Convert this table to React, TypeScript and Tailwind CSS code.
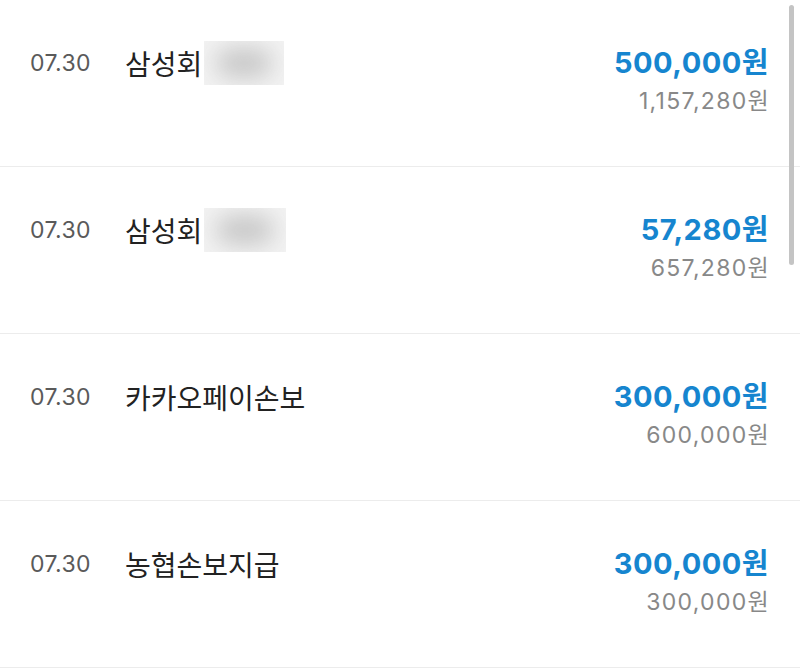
import React from 'react';

type Tx = {
  date: string;
  name: string;
  masked?: number;
  amount: string;
  balance: string;
};

const rows: Tx[] = [
  { date: '07.30', name: '삼성회', masked: 80, amount: '500,000원', balance: '1,157,280원' },
  { date: '07.30', name: '삼성회', masked: 82, amount: '57,280원', balance: '657,280원' },
  { date: '07.30', name: '카카오페이손보', amount: '300,000원', balance: '600,000원' },
  { date: '07.30', name: '농협손보지급', amount: '300,000원', balance: '300,000원' },
];

function MaskedText({ width }: { width: number }) {
  return (
    <div
      className="relative h-[44px] ml-[2px] bg-[#f3f3f3] overflow-hidden"
      style={{ width }}
    >
      <div className="absolute left-[12px] right-[12px] top-[8px] bottom-[8px] rounded-full bg-[#c4c4c4] blur-[12px]" />
    </div>
  );
}

function Row({ tx }: { tx: Tx }) {
  return (
    <div className="flex items-start justify-between h-[167px] pt-[43px] pl-[30px] pr-[31px] border-b border-[#ececec]">
      <div className="flex items-center h-[40px]">
        <span className="w-[95px] text-[23px] tracking-[0.4px] text-[#5a5a5a] font-['Inter','Noto_Sans_CJK_KR',sans-serif]">
          {tx.date}
        </span>
        <span className="text-[28px] text-[#222222] font-['Noto_Sans_CJK_KR',sans-serif] leading-none">
          {tx.name}
        </span>
        {tx.masked && <MaskedText width={tx.masked} />}
      </div>
      <div className="flex flex-col items-end font-['Inter','Noto_Sans_CJK_KR',sans-serif]">
        <span className="text-[29px] leading-[40px] font-bold text-[#1685cf] tracking-[0.5px]">
          {tx.amount}
        </span>
        <span className="text-[23px] leading-[32px] mt-[2px] mr-[-1px] text-[#888888] tracking-[1.3px]">
          {tx.balance}
        </span>
      </div>
    </div>
  );
}

export default function App() {
  return (
    <div className="relative w-[800px] h-[670px] bg-white overflow-hidden">
      {rows.map((tx, i) => (
        <Row key={i} tx={tx} />
      ))}
      <div className="absolute right-[6px] top-[5px] w-[5px] h-[260px] rounded-full bg-[#c4c4c4]" />
    </div>
  );
}
